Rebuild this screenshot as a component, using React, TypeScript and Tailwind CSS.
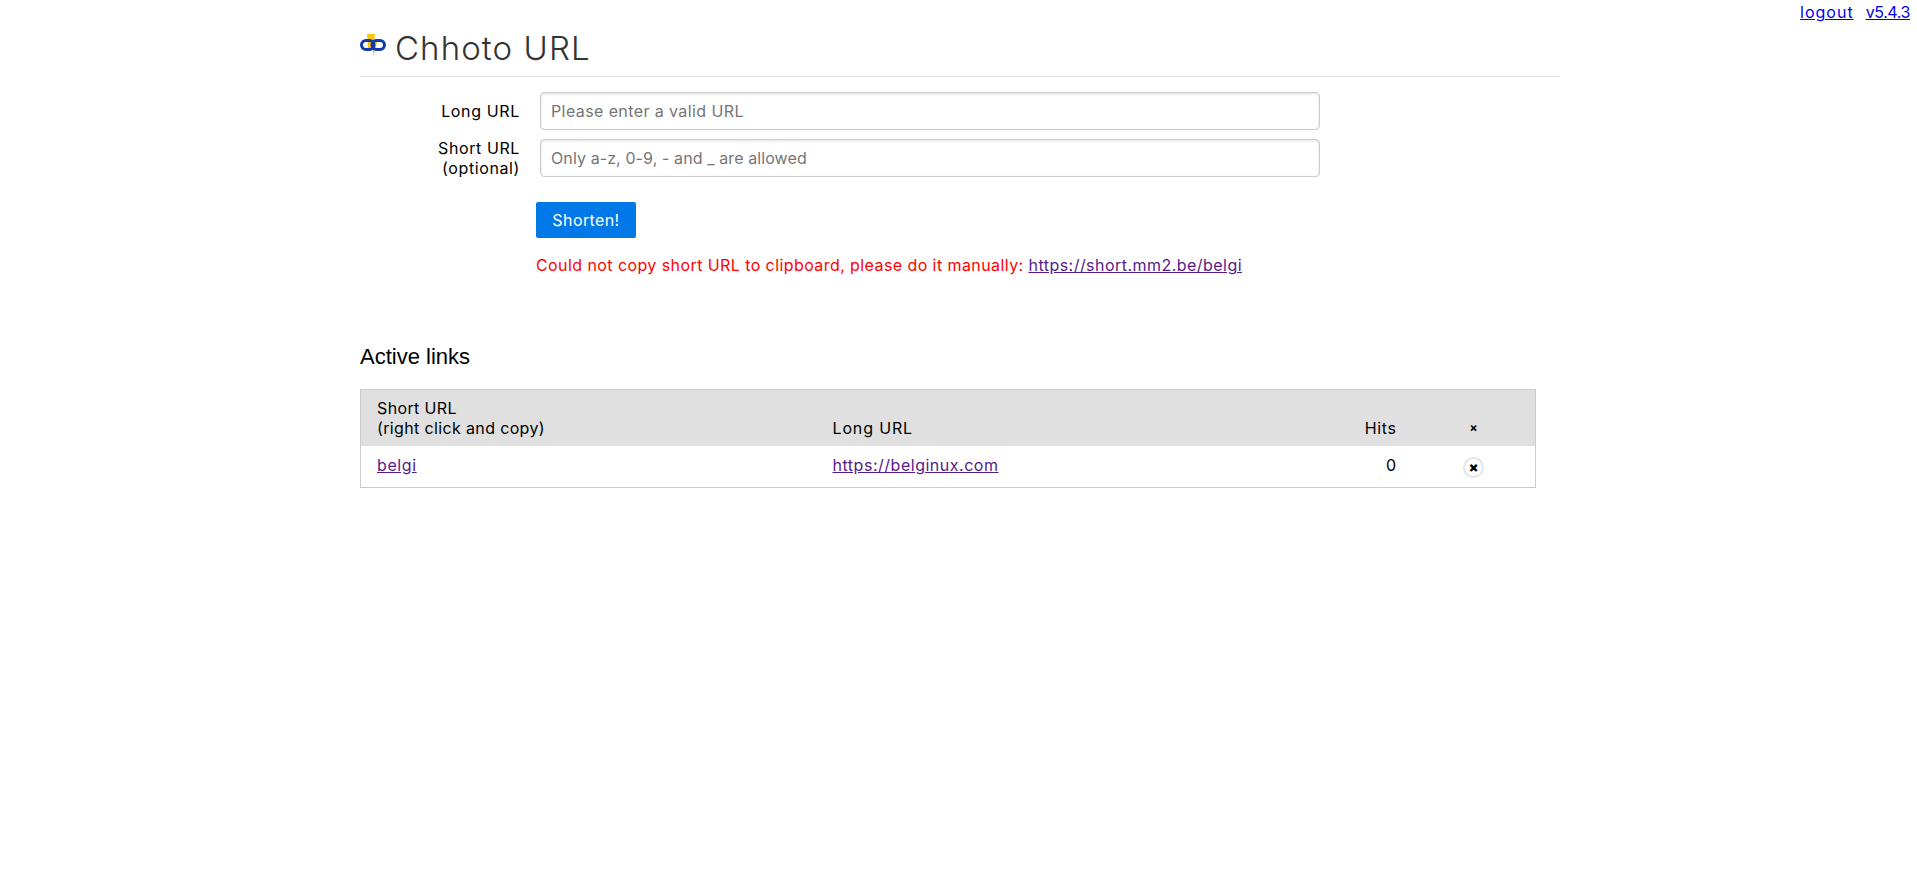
export default function App() {
  return (
    <div className="relative min-h-[880px] bg-white text-black text-base font-['Inter',sans-serif] tracking-[0.4px]">
      <div className="absolute top-0 right-[7px] flex gap-[12px] leading-6">
        <a href="#" className="underline text-[#0000ee] tracking-[1px]">logout</a>
        <a href="#" className="underline text-[#0000ee] tracking-[-0.4px]">v5.4.3</a>
      </div>
      <div className="ml-[360px] w-[1200px]">
        <header className="flex items-center h-[77px] pt-[20px] border-b border-[#e5e5e5]">
          <svg width="26" height="24" viewBox="0 0 26 24" className="mr-[9px] -mt-[4px]">
            <path d="M7 0 L15 0 L14.5 5 L18 5 L13 23 L13 15 L8 15 Z" fill="#f9c513" />
            <rect x="1.5" y="6.5" width="12.5" height="9" rx="4.5" fill="none" stroke="#0f3aa8" strokeWidth="3" />
            <rect x="12" y="6.5" width="12.5" height="9" rx="4.5" fill="none" stroke="#0f3aa8" strokeWidth="3" />
          </svg>
          <h1 className="text-[33px] font-light text-[#333] tracking-[1.1px] leading-none">Chhoto URL</h1>
        </header>
        <form className="mt-[15px]">
          <div className="flex items-center h-[38px]">
            <label className="w-[160px] text-right leading-[20px] tracking-[0.65px]">Long URL</label>
            <input placeholder="Please enter a valid URL" className="ml-[20px] w-[780px] h-[38px] px-[10px] border border-[#ccc] rounded shadow-[inset_0_1px_3px_#ddd] placeholder:text-[#757575] outline-none" />
          </div>
          <div className="flex items-center h-[38px] mt-[9px]">
            <label className="w-[160px] text-right leading-[20px] tracking-[0.6px]">Short URL<br />(optional)</label>
            <input placeholder="Only a-z, 0-9, - and _ are allowed" className="ml-[20px] w-[780px] h-[38px] px-[10px] border border-[#ccc] rounded shadow-[inset_0_1px_3px_#ddd] placeholder:text-[#757575] outline-none tracking-[0.1px]" />
          </div>
          <button type="button" className="block ml-[176px] mt-[25px] w-[100px] h-[36px] bg-[#0078e7] text-white rounded-[2px]">Shorten!</button>
          <p className="ml-[176px] mt-[15px] leading-6 text-[#ff0000] tracking-[0.42px]">
            Could not copy short URL to clipboard, please do it manually:{" "}
            <a href="#" className="underline text-[#551a8b] tracking-[0.46px]">https://short.mm2.be/belgi</a>
          </p>
        </form>
        <h2 className="mt-[66px] text-[22px] leading-7 font-['Liberation_Sans',sans-serif] tracking-normal">Active links</h2>
        <table className="mt-[18px] w-[1176px] table-fixed border border-[#cbcbcb] border-collapse">
          <colgroup>
            <col className="w-[456px]" />
            <col className="w-[456px]" />
            <col className="w-[140px]" />
            <col />
          </colgroup>
          <thead className="bg-[#e0e0e0] text-left align-bottom">
            <tr className="h-[56px]">
              <th className="px-4 pb-[8px] font-normal leading-5 tracking-[0.36px]">Short URL<br />(right click and copy)</th>
              <th className="px-4 pb-[8px] font-normal leading-5 tracking-[0.85px]">Long URL</th>
              <th className="px-4 pb-[8px] font-normal leading-5 text-right tracking-[0.6px]">Hits</th>
              <th className="px-4 pb-[8px] leading-5 text-center text-[12px] font-bold">×</th>
            </tr>
          </thead>
          <tbody>
            <tr className="h-[42px]">
              <td className="px-4 pb-[2px]"><a href="#" className="underline text-[#551a8b] tracking-[0.6px]">belgi</a></td>
              <td className="px-4 pb-[2px]"><a href="#" className="underline text-[#551a8b] tracking-[0.52px]">https://belginux.com</a></td>
              <td className="px-4 pb-[2px] text-right">0</td>
              <td className="px-4 text-center">
                <button type="button" className="inline-flex items-center justify-center w-[21px] h-[21px] rounded-full border-2 border-[#e5e5e5] bg-white text-[14px] font-black leading-none">×</button>
              </td>
            </tr>
          </tbody>
        </table>
      </div>
    </div>
  );
}
